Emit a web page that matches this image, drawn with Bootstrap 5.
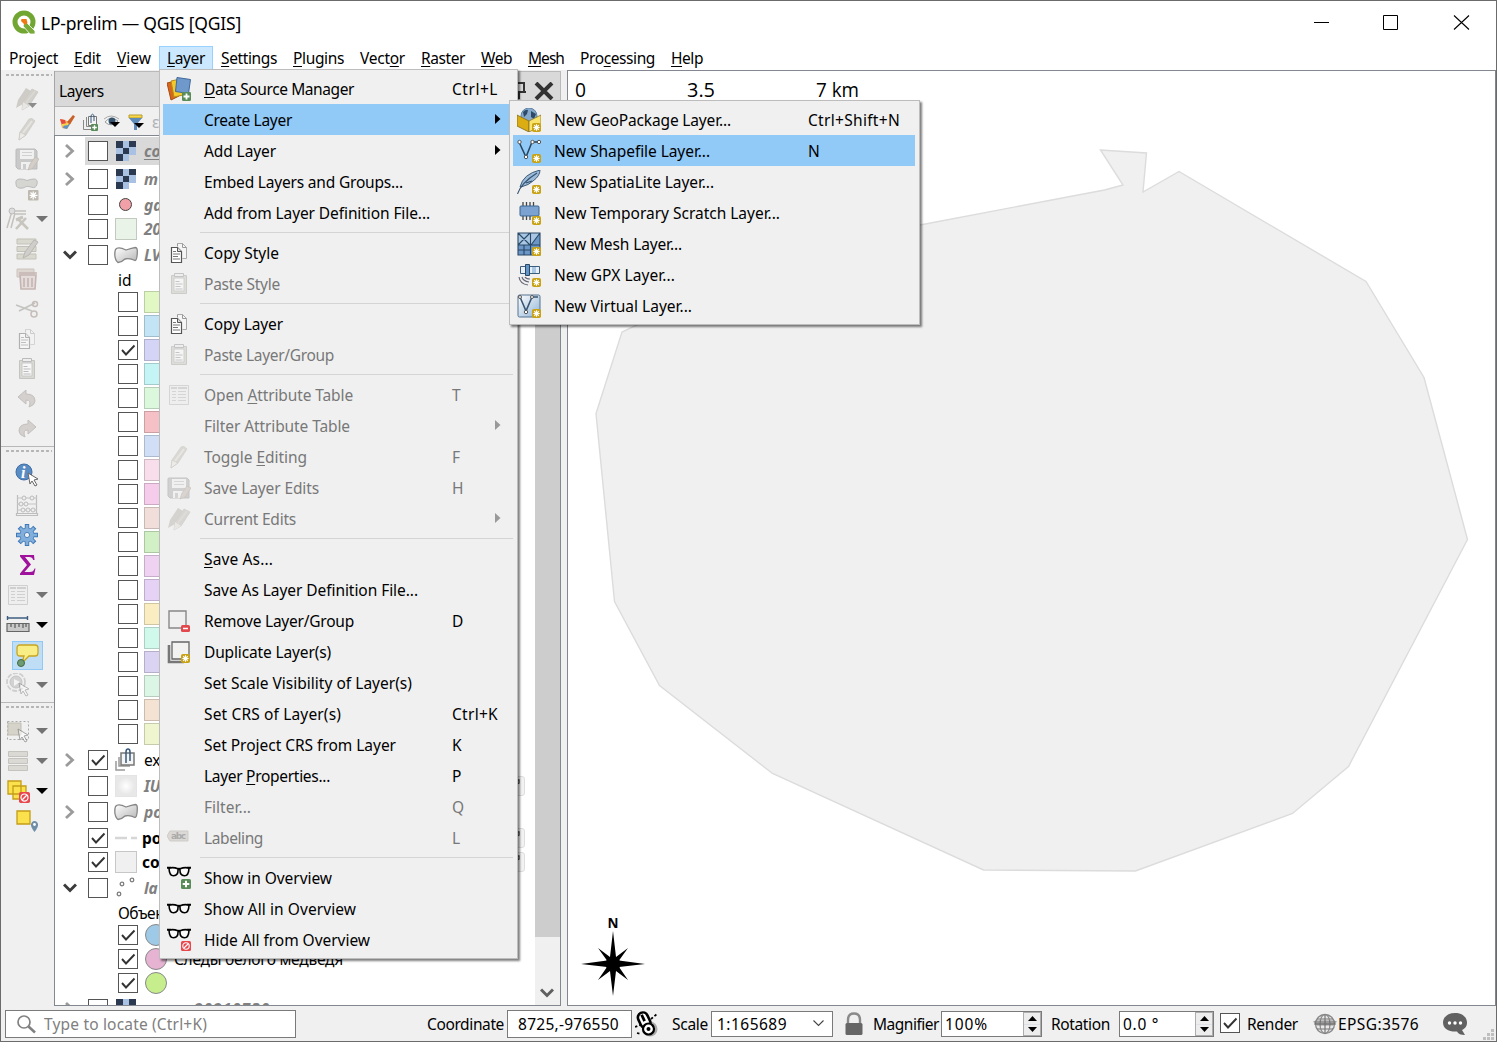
<!DOCTYPE html>
<html lang="en">
<head>
<meta charset="utf-8">
<title>LP-prelim — QGIS [QGIS]</title>
<link href="https://cdn.jsdelivr.net/npm/bootstrap@5.3.0/dist/css/bootstrap.min.css" rel="stylesheet">
<script src="https://cdn.jsdelivr.net/npm/bootstrap@5.3.0/dist/js/bootstrap.bundle.min.js"></script>
<style>
body{font-family:"Noto Sans","Liberation Sans",sans-serif;font-size:15.5px;line-height:20px;color:#000;background:#f0f0f0}
.win{width:1497px;height:1042px;border:1px solid #6b6b6b;overflow:hidden}
[data-w]{white-space:nowrap;display:inline-block}
u{text-underline-offset:2px;text-decoration-thickness:1px}
svg{display:block;flex:none}
.titlebar{height:45px;background:#fff}
.appname{font-size:17.5px;margin-left:5px;margin-top:-2px}
.menus{height:24px;background:#fff}
.menus .mi{height:24px;line-height:23px;border:1px solid transparent;padding:0}
.menus .mi.on{background:#cce8ff;border-color:#99d1ff}
.work{height:936px;border-top:1px solid #f0f0f0}
.tools{width:53px}
.grip{height:4px;margin:2px 2px 0 4px;background:radial-gradient(circle,#b4b4b4 1.1px,transparent 1.4px) 0 0/5px 4px}
.tb{height:30px}
.tb .main-ic{width:52px;display:flex;justify-content:center}
.tb.drop .main-ic{width:34px}
.brk{border-top:1px solid #b8b8b8;margin-top:2px}
.tb-on{background:#bfdef5;border:1px solid #90c8f6;width:31px;height:29px;display:flex;align-items:center;justify-content:center}
.dock{width:508px;border-left:1px solid #a5a5a5}
.dockhead{height:37px;background:#d9d9d9;border:1px solid #b9b9b9;border-left:0;padding:3px 6px 0 4px}
.docktools{height:28px;padding:2px 0 0 2px}
.tree{background:#fff;border:1px solid #828790;margin-left:-1px}
.twist{width:30px;display:flex;justify-content:center}
.cb{width:20px;height:20px;border:1px solid #333;background:#fff;flex:none;outline:.5px solid #555;outline-offset:-1px}
.off{color:#808080;font-style:italic;font-weight:700}
.seln{background:#d9d9d9}
.sw{width:22px;height:22px;border:1px solid rgba(0,0,0,.17)}
.dot{width:22px;height:22px;border-radius:50%;border:1px solid #888;margin-left:1px}
.ind{width:20px;height:20px;border:1px solid #dedede;border-radius:3px;background:#f3f3f3;margin-right:10px;display:flex;justify-content:flex-end;align-items:start}
.scroll{width:25px;background:#f0f0f0}
.thumb{height:801px;background:#cdcdcd}
.canvas{background:#fff;border:1px solid #828790;margin:-1px 0 0 6px}
.status{height:35px;background:#f0f0f0}
.fld{background:#fff;border:1px solid #7a7a7a;display:flex;align-items:center}
.spinb{width:18px;height:24px;border:1px solid #adadad;background:#ededed}
.spinb div{height:11px;display:flex;align-items:center;justify-content:center}
.pop{position:absolute;background:#f0f0f0;border:1px solid #bdbdbd;padding:3px;box-shadow:2px 2px 2px rgba(0,0,0,.5)}
.pop-main{left:159px;top:69px;width:359px;height:890px}
.pop-sub{left:509px;top:100px;width:411px;height:225px}
.it{height:31px;display:flex;align-items:center}
.it .ic{width:32px;display:flex;justify-content:center;margin-right:9px;flex:none}
.it .tx{width:248px;flex:none}
.pop-sub .it .tx{width:254px}
.it.dis{color:#787878}
.it.dis .ic{opacity:.8}
.it.hi{background:#91c9f7}
.pop-sub .it{width:402px}
.sp{height:9px;padding-top:4px}
.sp div{border-top:1px solid #d4d4d4;margin:0 1px 0 37px}
.arr{margin:-2px 13px 0 auto}
.kmtx{font-family:"Open Sans",sans-serif}
</style>
</head>
<body>
<svg width="0" height="0" class="position-absolute">
<defs>
<linearGradient id="gb" x1="0" y1="0" x2="1" y2="1"><stop offset="0" stop-color="#fff"/><stop offset="1" stop-color="#b5b5b5"/></linearGradient>
<linearGradient id="gv" x1="0" y1="0" x2="1" y2="1"><stop offset="0" stop-color="#fff"/><stop offset="1" stop-color="#8fb4d6"/></linearGradient>
<symbol id="pencil" viewBox="0 0 24 24"><path d="M4 23l1-8L14 2q3-2 6 2l-9 14z" fill="#d5d3ce" stroke="#cfcdc8" stroke-width=".8"/><path d="M4 23l1-8 6 3z" fill="#eceae6" stroke="#c6c4bf" stroke-width=".7"/><path d="M8 16L17 4" stroke="#e6e4e0" stroke-width="2"/></symbol>
<symbol id="pencils" viewBox="0 0 24 24"><path d="M1 21l2-8L11 1l5 3-8 13z" fill="#cfccc7"/><path d="M7 23l1-8L17 2l6 3-9 14z" fill="#d2d0cb" stroke="#cac8c3" stroke-width=".8"/><path d="M7 23l1-8 6 4z" fill="#e8e6e2"/><path d="M11 16L20 4" stroke="#dbd8d4" stroke-width="1.500"/></symbol>
<symbol id="save" viewBox="0 0 24 24"><path d="M1 3q0-1 1-1h18l2 2v18H3l-2-2z" fill="#c9c9c9" stroke="#bbb"/><path d="M5 3h14v9H5zM6 15h11v7H6z" fill="#f0f0f0"/><path d="M7 5.500h10M7 8.500h10" stroke="#d0d0d0"/><path d="M8 17h3v5H8z" fill="#ccc"/><path d="M13 23l2-6 5-7 4 2-6 9z" fill="#d5cdc7" stroke="#bdbab5" stroke-width=".7"/></symbol>
<symbol id="copy" viewBox="0 0 24 24"><path d="M10.500 2.500h5l4 4v11h-4" fill="#f5f5f5" stroke="#aaa"/><path d="M15.500 2.500v4h4M10.500 2.500v3" fill="none" stroke="#999"/><path d="M4.500 6.500h6l4 4v11h-10z" fill="#fff" stroke="#555" stroke-width="1.200"/><path d="M10.500 6.500v4h4" fill="#ddd" stroke="#555"/><path d="M6 10.500h3M6 13h7M6 15.500h5M6 18h7" stroke="#777"/></symbol>
<symbol id="paste" viewBox="0 0 24 24"><path d="M4.500 3.500h15v18h-15z" fill="#d8d8d4" stroke="#c4c4c0"/><path d="M7 6h10v13H7z" fill="#f7f7f7" stroke="#c8c8c8"/><path d="M7.500 1.500h9v3h-9z" fill="#eee" stroke="#bbb"/><path d="M8.500 9.500h4M8.500 12h7M8.500 14.500h5M8.500 17h7" stroke="#bbb"/></symbol>
<symbol id="table" viewBox="0 0 24 24"><path d="M2.500 2.500h19v19h-19z" fill="#eee" stroke="#cfcfcf"/><path d="M4 4h6v2H4zM11 4h9v2h-9z" fill="#cfcfcf"/><path d="M5 8.500h4M11 8.500h8M5 11.500h4M11 11.500h8M5 14.500h4M11 14.500h8M5 17.500h4M11 17.500h8" stroke="#cfcfcf" stroke-width="1.200"/></symbol>
<symbol id="star" viewBox="0 0 10 10"><rect width="10" height="10" rx="2" fill="#c9a317"/><path d="M5 1.500v7M1.500 5h7M2.500 2.500l5 5M7.500 2.500l-5 5" stroke="#fff" stroke-width="1.200"/></symbol>
<symbol id="plus" viewBox="0 0 10 10"><rect width="10" height="10" rx="1.500" fill="#5a8c5a"/><path d="M5 1.700v6.600M1.700 5h6.600" stroke="#fff" stroke-width="2"/></symbol>
<symbol id="no" viewBox="0 0 10 10"><rect width="10" height="10" rx="1.500" fill="#e8484d"/><circle cx="5" cy="5" r="3.200" fill="none" stroke="#fff" stroke-width="1.100"/><path d="M3 7l4-4" stroke="#fff" stroke-width="1.100"/></symbol>
<symbol id="glasses" viewBox="0 0 24 12"><path d="M0 1.800h4M20 1.800h4M10 3.500q2-1.500 4 0" fill="none" stroke="#000" stroke-width="2"/><path d="M2 2.200Q6 .8 11 2.800 11.500 9.800 6.500 9.800 2.300 9.800 2 2.200zM22 2.200Q18 .8 13 2.800 12.500 9.800 17.500 9.800q4.200 0 4.500-7.600z" fill="#fafafa" stroke="#000" stroke-width="1.600"/></symbol>
<symbol id="poly" viewBox="0 0 24 18"><path d="M1.500 3.500Q4 0 12 4q6-2 9.500-2.500 2 0 1.800 5-.3 8-2.300 8-5-2.500-10-1.500-3 3-7 3.500Q1 14 .8 9 .8 5 1.500 3.500z" fill="url(#gb)" stroke="#858585" stroke-width="1.300"/></symbol>
<symbol id="raster" viewBox="0 0 20 20"><path d="M0 0h20v14h-7v6H0z" fill="#a9c1e3"/><path d="M0 0h7v7H0zM13 0h7v6h-7zM7 7h6v6H7zM0 13h7v7H0z" fill="#2b3a50"/></symbol>
<symbol id="tick" viewBox="0 0 18 18"><path d="M3 9l4 4.500L15.500 4.500" fill="none" stroke="#333" stroke-width="1.900"/></symbol>
<symbol id="right" viewBox="0 0 12 16"><path d="M2 2l6.500 6L2 14" fill="none" stroke="#9b9b9b" stroke-width="2.800"/></symbol>
<symbol id="down" viewBox="0 0 14 10"><path d="M1 1.500l6 6 6-6" fill="none" stroke="#3c3c3c" stroke-width="3"/></symbol>
<symbol id="tri" viewBox="0 0 12 6"><path d="M0 0h12L6 6z"/></symbol>
<symbol id="rt" viewBox="0 0 6 10"><path d="M0 0l5.500 5L0 10z"/></symbol>
<symbol id="group" viewBox="0 0 24 24"><path d="M2 13v9h9M5 9v9h11" fill="none" stroke="#999" stroke-width="1.500"/><path d="M7 5h13v12H7z" fill="#f5f5f5" stroke="#777" stroke-width="1.500"/><path d="M12 15V4q0-3 2-3t2 3v9" fill="none" stroke="#35597d" stroke-width="1.500"/></symbol>
<symbol id="cursor" viewBox="0 0 12 15"><path d="M1 1l10 6-4 1 3 5-2 1-3-5-2 3z" fill="#fff" stroke="#666"/></symbol>
<symbol id="undo" viewBox="0 0 24 24"><path d="M3 10l8-7v4q9 0 9 7 0 4-6 6 3-7-3-7v4z" fill="#d3d0cd" stroke="#c3bfbc"/></symbol>
<symbol id="blob-star" viewBox="0 0 24 24"><path d="M1 7Q0 2 5 2q4 0 7 1.500Q16 2 19 2q4 0 3 5t-6 3q-4-2-8 1-7 1-7-4z" fill="#d5d5d2" stroke="#bbb"/><rect x="13" y="13" width="10.500" height="10.500" rx="1" fill="#bdb9b0"/><path d="M18.200 14.500v8M14.500 18.300h8M15.500 15.500l5.500 5.500M21 15.500l-5.500 5.500" stroke="#fff" stroke-width="1.200"/></symbol>
</defs>
</svg>

<div class="win d-flex flex-column">
  <header class="titlebar d-flex align-items-center">
    <svg width="24" height="24" viewBox="0 0 24 24" style="margin:-3px 0 0 11px"><circle cx="12" cy="12" r="9" fill="none" stroke="#72a632" stroke-width="5"/><path d="M13 11l10 10v3h-5l-7-8z" fill="#78aa3a" stroke="#fff" stroke-width=".8"/><path d="M9.500 9h5l1 4-2.500 2-4-4z" fill="#ee7913"/></svg>
    <span class="appname" data-w="200">LP-prelim — QGIS [QGIS]</span>
    <div class="ms-auto d-flex align-items-center" style="margin:-3px 26px 0 0">
      <svg width="157" height="16" viewBox="0 0 157 16"><path d="M1 8.500h15M70.500 1.500h14v14h-14z" fill="none" stroke="#000"/><path d="M141 1.500l15 14M156 1.500l-15 14" stroke="#000" stroke-width="1.100"/></svg>
    </div>
  </header>

  <nav class="menus d-flex" id="mainMenu"></nav>

  <main class="work d-flex">
    <aside class="tools">
      <div class="grip"></div>
      <div id="tools1" style="padding-top:7px"></div>
      <div class="brk"></div><div class="grip"></div>
      <div id="tools2" style="padding-top:7px"></div>
      <div class="brk"></div><div class="grip"></div>
      <div id="tools3" style="padding-top:7px"></div>
    </aside>

    <section class="dock d-flex flex-column">
      <div class="dockhead d-flex align-items-center">
        <span data-w="45">Layers</span>
        <svg class="ms-auto" width="16" height="20" viewBox="0 0 16 20"><path d="M1 2h9v9H1zM0 11h12M5 11v7" fill="none" stroke="#333" stroke-width="2"/></svg>
        <svg class="ms-1" width="20" height="18" viewBox="0 0 20 18"><path d="M2 1l16 16M18 1L2 17" stroke="#333" stroke-width="4"/></svg>
      </div>
      <div class="docktools d-flex align-items-center">
        <svg width="20" height="18" viewBox="0 0 20 18"><path d="M3 6l5 1 6 3-4 6-5-1z" fill="#f0b45a"/><path d="M10 9l6-7 2 1.500-5 8z" fill="#c9622a"/><path d="M3 6l5 1 1 4-4 1z" fill="#e5483f"/><path d="M7 12l6-1-3 5-4-1z" fill="#5e92c6"/><path d="M5 12l6-1" stroke="#f6d14b" stroke-width="1.800"/></svg>
        <svg width="20" height="20" viewBox="0 0 20 20" style="margin-left:3px"><path d="M3.500 8v9.500H11M6.500 5v9.500H13" fill="none" stroke="#888"/><path d="M8.500 4.500h8v9h-8z" fill="#f5f5f5" stroke="#777"/><path d="M11 11V3.500q1.500-2.500 3 0V9" fill="none" stroke="#35597d"/><use href="#plus" x="11" y="12" width="7" height="7"/></svg>
        <svg width="20" height="16" viewBox="0 0 20 16" style="margin-left:3px"><path d="M2 8Q8 1 15 7q-7 7-13 1z" fill="#fff" stroke="#999"/><circle cx="9" cy="7" r="3.500" fill="#34536f"/><path d="M1 5Q8-1 16 5" fill="none" stroke="#aaa"/><path d="M7 8h10l-5 5z"/></svg>
        <svg width="20" height="18" viewBox="0 0 20 18" style="margin-left:3px"><path d="M3 2h13v3H3z" fill="#f6d84a" stroke="#b99b2f"/><path d="M3 5h13l-5 6v6H8v-6z" fill="#5e8bb8"/><path d="M8 10h10l-5 5z"/></svg>
        <span class="text-secondary opacity-50" style="margin-left:6px">ε</span>
      </div>
      <div class="tree d-flex flex-grow-1 overflow-hidden">
        <div class="flex-grow-1 overflow-hidden" id="layerTree" style="padding-top:1px"></div>
        <div class="scroll d-flex flex-column">
          <div class="thumb"></div>
          <svg width="14" height="10" style="margin:51px 0 0 5px" opacity=".8"><use href="#down"/></svg>
        </div>
      </div>
    </section>

    <section class="canvas flex-grow-1 overflow-hidden">
      <svg width="928" height="934" viewBox="568 71 928 934">
        <path d="M1100.500 150l46 3-3.500 39 36-20.500 187 110 58 96 43.500 162-119 227-56 47-157 57.500-152-1-211-96.500-113-88-45-84-18.500-188L622 332l40-19 258-88 184.500-35 18.500-5z" fill="#f0f0f0" stroke="#dcdcdc" stroke-width="1.400"/>
        <g class="kmtx" font-size="19.500"><text x="575" y="96.500" textLength="11" lengthAdjust="spacingAndGlyphs">0</text><text x="687" y="96.500" textLength="28" lengthAdjust="spacingAndGlyphs">3.5</text><text x="816" y="96.500" textLength="43" lengthAdjust="spacingAndGlyphs">7 km</text></g>
        <text x="607.500" y="928" font-size="13.500" font-weight="700" textLength="11" lengthAdjust="spacingAndGlyphs" font-family="Open Sans">N</text>
        <path d="M613 931l3 26 12-9-9 12.500 26 3.500-26 3L628 980l-12-9-3 25-3-25-12 9 9-13-26-3 26-3.500L598 948l12 9z"/>
        <circle cx="613" cy="964" r="7.500"/>
      </svg>
    </section>
  </main>

  <footer class="status d-flex align-items-center">
    <div class="fld" style="margin-left:4px;width:291px;height:28px;padding:1px 0 0 10px">
      <svg width="20" height="20" viewBox="0 0 20 20"><circle cx="8" cy="8" r="6" fill="none" stroke="#808080" stroke-width="1.700"/><path d="M12.500 12.500L19 18.500" stroke="#808080" stroke-width="2.500"/></svg>
      <span data-w="163" style="margin-left:8px;color:#808080">Type to locate (Ctrl+K)</span>
    </div>
    <span data-w="77" style="margin:1px 0 0 131px">Coordinate</span>
    <div class="fld" style="margin-left:3px;width:125px;height:28px;padding:1px 0 0 10px"><span data-w="101">8725,-976550</span></div>
    <svg width="26" height="26" viewBox="0 0 26 26" style="margin-left:3px"><circle cx="15" cy="18" r="7.500" fill="#aaa"/><g transform="rotate(-25 10 11)"><rect x="5" y="1" width="10" height="16" rx="5" fill="#fff" stroke="#000" stroke-width="2.600"/><path d="M10 3v7" stroke="#000" stroke-width="2.800"/></g><circle cx="13.500" cy="18" r="5.500" fill="#fff" stroke="#000" stroke-width="2.200"/><circle cx="13.500" cy="18" r="2"/><path d="M16 8l6-5M0 16l5-2M2 22l4 1" stroke="#000" stroke-width="1.800" stroke-dasharray="2.500 2"/></svg>
    <span data-w="36" style="margin-left:11px">Scale</span>
    <div class="fld" style="margin-left:3px;width:122px;height:26px;padding-left:5px"><span data-w="70">1:165689</span><svg class="ms-auto me-2" width="11" height="7"><path d="M.5.500l5 5 5-5" fill="none" stroke="#444" stroke-width="1.100"/></svg></div>
    <svg width="20" height="24" viewBox="0 0 20 24" style="margin-left:11px"><path d="M4 12V8q0-6.500 6-6.500T16 8v4" fill="none" stroke="#8a8a8a" stroke-width="2.400"/><rect x="1.500" y="11" width="17" height="12" rx="1.500" fill="#666"/></svg>
    <span data-w="66" style="margin:1px 0 0 9px">Magnifier</span>
    <div class="fld" style="margin-left:2px;width:101px;height:26px;padding:0 0 0 3px"><span data-w="43">100%</span><div class="spinb ms-auto"><div><svg width="9" height="5"><path d="M0 5h9L4.500 0z"/></svg></div><div class="border-top"><svg width="9" height="5"><path d="M0 0h9L4.500 5z"/></svg></div></div></div>
    <span data-w="59" style="margin:1px 0 0 9px">Rotation</span>
    <div class="fld" style="margin-left:9px;width:95px;height:26px;padding:0 0 0 3px"><span data-w="36">0.0 °</span><div class="spinb ms-auto"><div><svg width="9" height="5"><path d="M0 5h9L4.500 0z"/></svg></div><div class="border-top"><svg width="9" height="5"><path d="M0 0h9L4.500 5z"/></svg></div></div></div>
    <div class="cb" style="margin:-2px 0 0 6px"><svg width="18" height="18"><use href="#tick"/></svg></div>
    <span data-w="51" style="margin-left:7px">Render</span>
    <svg width="24" height="22" viewBox="0 0 24 22" style="margin-left:15px"><circle cx="12" cy="11" r="9.500" fill="#e8e8e8" stroke="#888" stroke-width="1.300"/><path d="M12 1v20M4 6h16M1 11h22M4 16h16" stroke="#777" stroke-width="1.200"/><ellipse cx="12" cy="11" rx="5" ry="9.500" fill="none" stroke="#888" stroke-width="1.200"/><path d="M0 8.500l4 4h16l4-4-3-1H3z" fill="#666" opacity=".6"/></svg>
    <span data-w="81" style="margin:1px 0 0 1px">EPSG:3576</span>
    <svg width="26" height="24" viewBox="0 0 26 24" style="margin-left:23px"><path d="M13 1c7 0 12 4 12 9.500 0 4-2 6-5 7.500l3 5c-4 0-7-1-8-3.500C7 20 1 17 1 10.500 1 5 6 1 13 1z" fill="#616161"/><circle cx="7.500" cy="11" r="1.700" fill="#fff"/><circle cx="13" cy="11" r="1.700" fill="#fff"/><circle cx="18.500" cy="11" r="1.700" fill="#fff"/></svg>
    <svg width="11" height="11" viewBox="0 0 11 11" class="ms-auto align-self-end" style="margin:0 2px 1px 0"><path d="M8 0h3v3H8zM4 4h3v3H4zM8 4h3v3H8zM0 8h3v3H0zM4 8h3v3H4zM8 8h3v3H8z" fill="#bfbfbf"/></svg>
  </footer>
</div>

<div class="pop pop-main" id="layerMenu"></div>
<div class="pop pop-sub" id="createMenu"></div>

<script>
const $id=i=>document.getElementById(i);
const use=(id,w=24,h=24)=>`<svg width="${w}" height="${h}"><use href="#${id}"/></svg>`;
const svg=(b,w=24,h=24)=>`<svg width="${w}" height="${h}" viewBox="0 0 24 24">${b}</svg>`;
const star='<use href="#star" x="15" y="15" width="9" height="9"/>';

/* menu bar: label, left edge, text width */
const bar=[['Pro<u>j</u>ect',9,49],['<u>E</u>dit',74,27],['<u>V</u>iew',117,34],['<u>L</u>ayer',167,38],['<u>S</u>ettings',221,56],['<u>P</u>lugins',293,51],['Vect<u>o</u>r',360,45],['<u>R</u>aster',421,44],['<u>W</u>eb',481,31],['<u>M</u>esh',528,36],['Pro<u>c</u>essing',580,75],['<u>H</u>elp',671,32]];
let x=1;
$id('mainMenu').innerHTML=bar.map(([t,l,w],i)=>{const next=i<bar.length-1?bar[i+1][1]-8:l+w+8;const pad=l-x-1;const s=`<div class="mi ${i==3?'on':''}" style="width:${next-x}px;padding-left:${pad}px"><span data-w="${w}">${t}</span></div>`;x=next;return s}).join('');

/* toolbars */
const tb=(ic,drop)=>`<div class="tb d-flex align-items-center ${drop?'drop':''}"><div class="main-ic">${ic}</div>${drop?`<svg width="12" height="6" fill="${drop}" style="margin-left:1px"><use href="#tri"/></svg>`:''}</div>`;
$id('tools1').innerHTML=[
 tb(svg('<use href="#pencils"/><path d="M13 16h9l-4.500 5z" fill="#8c8c8c"/>')),
 tb(use('pencil')),tb(use('save')),tb(use('blob-star')),
 tb(svg('<path d="M1 21L6 4M6 4h14M8 7h12M5 21L9 6" fill="none" stroke="#c4c1bc" stroke-width="1.500"/><circle cx="6" cy="4" r="3" fill="#ddd" stroke="#bbb"/><path d="M10 22L20 11M12 12l10 10" stroke="#c8c5be" stroke-width="2.600"/><path d="M10 13l7-3" stroke="#c8c5be" stroke-width="3"/>'),'#737373'),
 tb(svg('<path d="M2 2h19v5H2zM2 9.500h19v5H2zM2 17h19v5H2z" fill="#dad9cf" stroke="#c3c2b8"/><path d="M8 21l2-6 9-12 4 2-9 13z" fill="#d0ceca" stroke="#b9b7b2"/>')),
 tb(svg('<path d="M2 2h17v8H2z" fill="#ddd6d0" stroke="#ccc4be"/><path d="M4 6h18M5 8h16l-1 14H6z" fill="#e3dcda" stroke="#c5b5b2" stroke-width="1.600"/><path d="M9 11v9M13 11v9M17 11v9" stroke="#c5b5b2" stroke-width="1.600"/>')),
 tb(svg('<path d="M1 8l16 6M4 14L20 6" stroke="#c3c3c0" stroke-width="1.600"/><circle cx="20" cy="7" r="2.500" fill="none" stroke="#c6bdba" stroke-width="1.500"/><circle cx="19" cy="17" r="3" fill="none" stroke="#c6bdba" stroke-width="1.500"/>')),
 tb('<div style="opacity:.4">'+use('copy')+'</div>'),tb(use('paste')),tb(use('undo')),
 tb(svg('<use href="#undo" transform="translate(24 0) scale(-1 1)"/>'))].join('');
$id('tools2').innerHTML=[
 tb(svg('<circle cx="9" cy="9" r="8" fill="#5a8cc4" stroke="#3f6da5"/><text x="6" y="15" fill="#fff" font-size="16" font-style="italic" font-weight="700" font-family="Liberation Serif">i</text><use href="#cursor" x="12" y="9" width="12" height="15"/>')),
 tb(svg('<path d="M2.500 2v18M21.500 2v18M1.500 20.500h21v2h-21z" fill="none" stroke="#bdbdbd" stroke-width="1.200"/><path d="M2 5h20M2 11h20M2 17h20" stroke="#c4c4c4"/><g fill="#eee" stroke="#bbb"><circle cx="9" cy="5" r="2"/><circle cx="17" cy="5" r="2"/><circle cx="6" cy="11" r="2"/><circle cx="11" cy="11" r="2"/><circle cx="8" cy="17" r="2"/><circle cx="13" cy="17" r="2"/><circle cx="18" cy="17" r="2"/></g>')),
 tb(svg('<g stroke="#3f79b8" stroke-width="4.400"><path d="M12 1v22M1 12h22M4.200 4.200l15.600 15.600M19.800 4.200L4.200 19.800"/></g><circle cx="12" cy="12" r="7.500" fill="#4a80ba"/><g stroke="#82aedb" stroke-width="2.600"><path d="M12 2v20M2 12h20M5 5l14 14M19 5L5 19"/></g><circle cx="12" cy="12" r="6.700" fill="#82aedb"/><circle cx="12" cy="12" r="2.600" fill="#f0f0f0" stroke="#4a80ba"/>')),
 tb(svg('<path d="M5 2h14l.5 5h-1.300Q17.500 4 14 4h-4l6 7.500L9.500 19H15q3.500 0 4.500-3.500h1L19 22H5v-1.500L12 12 5 3.500z" fill="#a0129c"/>')),
 tb(use('table'),'#737373'),
 tb(svg('<path d="M2 5h19M1.500 3v4M21.500 3v4" stroke="#3f5d80" stroke-width="1.400"/><path d="M1 10.500h22v8H1z" fill="#c9c9c9" stroke="#666" stroke-width="1.200"/><path d="M5 11v3M9 11v4M13 11v3M17 11v4M20 11v3" stroke="#444"/>'),'#000'),
 tb('<div class="tb-on">'+svg('<path d="M5 2h15q3 0 3 3v5q0 3-3 3h-6l-7 7 2-7H5q-3 0-3-3V5q0-3 3-3z" fill="#f9ee86" stroke="#c8a520" stroke-width="1.300"/><circle cx="6" cy="20" r="3.500" fill="#6d9b72" stroke="#416b48"/>')+'</div>'),
 tb(svg('<circle cx="10" cy="9" r="9" fill="none" stroke="#cecece" stroke-width="1.800" stroke-dasharray="5 1.500"/><circle cx="10" cy="9" r="6" fill="#d2d2d2" stroke="#c4c4c4"/><path d="M8 6l6 3-6 4z" fill="#f3f3f3"/><use href="#cursor" x="12" y="9" width="12" height="15" opacity=".4"/>'),'#737373')].join('');
$id('tools3').innerHTML=[
 tb(svg('<path d="M1.500 2.500h21v18h-21z" fill="none" stroke="#aaa" stroke-dasharray="2 2"/><path d="M2 4h13v12H2z" fill="#d6d4ca" stroke="#c1beb1"/><use href="#cursor" x="11" y="9" width="12" height="15" opacity=".55"/>'),'#737373'),
 tb(svg('<path d="M2.500 2.500h19v5h-19zM2.500 9.500h19v5h-19zM2.500 16.500h19v5h-19z" fill="#dad9d3" stroke="#c4c3bd"/>'),'#737373'),
 tb(svg('<path d="M2 2h13v13H2zM7 7h13v13H7z" fill="#fbe24c" stroke="#c49d17" stroke-width="1.300"/><use href="#no" x="13" y="13" width="11" height="11"/>'),'#000'),
 tb(svg('<path d="M2 2h13v13H2z" fill="#fbe24c" stroke="#c49d17" stroke-width="1.300"/><path d="M19.500 23q-4-5-3.500-8 1-3 3.500-3t3.500 3q.5 3-3.500 8z" fill="#6f8ea8"/><circle cx="19.500" cy="15.500" r="1.400" fill="#fff"/>'))].join('');

/* layer tree */
const cb=c=>`<div class="cb">${c?use('tick',18,18):''}</div>`;
const row=(h,tw,c,ic,t,cls='',ind='')=>`<div class="d-flex" style="height:${h}px"><div class="twist align-items-center">${tw=='r'?use('right',12,16):tw=='d'?use('down',14,10):''}</div><div class="d-flex align-items-center flex-grow-1 ${cls.includes('seln')?'seln':''}" style="padding-left:3px">${cb(c)}<div style="width:24px;margin:0 6px" class="d-flex justify-content-center">${ic}</div><span class="text-nowrap ${cls.replace('seln','')}">${t}</span>${ind}</div></div>`;
const leg=(c,sym,t='')=>`<div class="d-flex align-items-center" style="height:24px;padding-left:63px">${cb(c)}<div style="margin-left:6px">${sym}</div><span style="margin-left:7px">${t}</span></div>`;
const sw=c=>`<div class="sw" style="background:${c}"></div>`, dot=c=>`<div class="dot" style="background:${c}"></div>`;
const ind='<div class="ind ms-auto"><svg width="9" height="10"><path d="M1 3h3v3l-4 2" fill="none" stroke="#444" stroke-width="1.300"/></svg></div>';
const head=(h,t)=>`<div style="height:${h}px;line-height:${h+2}px;padding-left:63px">${t}</div>`;
const cols=['#e2f8c4','#c2e4f5','#d4d4f7','#c4f5f4','#dbf8dc','#f5c1c6','#d0dff6','#f8deea','#f5ccea','#f1dedb','#d1f0c6','#efd2f2','#e6d2f5','#f9edc1','#d0f9ec','#dad3f2','#dcf6e6','#f4e3d2','#eff5cf'];
$id('layerTree').innerHTML=row(28,'r',0,use('raster',20,20),'<u>co</u>','off seln')
+row(28,'r',0,use('raster',20,20),'m','off')
+row(24,'',0,'<div style="width:13px;height:13px;border-radius:50%;background:#f0a0a6;border:1.500px solid #444"></div>','ga','off')
+row(24,'',0,sw('#eaf3e7'),'20','off')
+row(28,'d',0,use('poly',24,18),'LV','off')
+head(21,'id')+cols.map((c,i)=>leg(i==2,sw(c))).join('')
+row(28,'r',1,use('group'),'ex')
+row(24,'',0,'<div class="sw" style="background:radial-gradient(#fff,#e8e8e8 60%);border-color:#e4e4e4"></div>','IU','off',ind)
+row(28,'r',0,use('poly',24,18),'po','off')
+row(24,'',1,'<svg width="24" height="4"><path d="M1 2h12M17 2h6" stroke="#d6d6d6" stroke-width="2.500"/></svg>','<span style="margin-left:-2px">po</span>','fw-bold',ind)
+row(24,'',1,sw('#f0f0f0'),'<span style="margin-left:-2px">co</span>','fw-bold',ind)
+row(28,'d',0,svg('<g fill="none" stroke="#7d7d7d" stroke-width="1.300"><circle cx="5" cy="18" r="1.800"/><circle cx="8" cy="8" r="1.800"/><circle cx="18" cy="4" r="1.800"/></g>'),'la','off')
+head(21,'<span data-w="45">Объек</span>')+leg(1,dot('#9fcae7'))+leg(1,dot('#e6b3d3'),'<span data-w="169">Следы белого медведя</span>')+leg(1,dot('#c7ee8d'))
+row(28,'r',0,use('raster',20,20),'<span style="margin-left:50px;letter-spacing:1px">20210730</span>','off');

/* menus: icon, label, label width, shortcut, flags */
const it=(ic,t,w,k='',f='')=>`<div class="it ${f.includes('d')?'dis':''} ${f.includes('h')?'hi':''}"><div class="ic">${ic}</div><div class="tx"><span data-w="${w}">${t}</span></div>${k?`<span ${k.length>1?`data-w="${k.length>7?92:46}"`:''}>${k}</span>`:''}${f.includes('a')?`<svg class="arr" width="6" height="10" fill="${f.includes('d')?'#999':'#000'}"><use href="#rt"/></svg>`:''}</div>`;
const sp='<div class="sp"><div></div></div>';
$id('layerMenu').innerHTML=
 it(svg('<path d="M0 6l9-2 3 15-8 4z" fill="#d9651b" stroke="#a74c12"/><path d="M4 4l9-2 3 16-9 2z" fill="#f3c92d" stroke="#b48d19"/><path d="M10 .5l13.500 2-2 14-13-2z" fill="#6f98cb" stroke="#40699a"/><use href="#plus" x="15" y="15" width="9" height="9"/>'),'<u>D</u>ata Source Manager',150,'Ctrl+L')
+it('','Create Layer',88,'','ha')+it('','Add Layer',72,'','a')+it('','Embed Layers and Groups...',199)+it('','Add from Layer Definition File...',226)+sp
+it(use('copy'),'Copy Style',75)+it(use('paste'),'Paste Style',76,'','d')+sp
+it(use('copy'),'Copy Layer',79)+it(use('paste'),'Paste Layer/Group',130,'','d')+sp
+it(use('table'),'Open <u>A</u>ttribute Table',149,'T','d')+it('','Filter Attribute Table',146,'','da')+it(use('pencil'),'Toggle <u>E</u>diting',103,'F','d')+it(use('save'),'Save Layer Edits',115,'H','d')+it(use('pencils'),'Current Edits',92,'','da')+sp
+it('','<u>S</u>ave As...',69)+it('','Save As Layer Definition File...',214)
+it(svg('<path d="M2 2h17v17H2z" fill="#f0f0f0" stroke="#888" stroke-width="1.400"/><rect x="14" y="16" width="9" height="7" rx="1.500" fill="#e3484e"/><path d="M16 19.500h5" stroke="#fff" stroke-width="1.500"/>'),'Remove Layer/Group',150,'D')
+it(svg('<path d="M2 5v17h15" fill="none" stroke="#777" stroke-width="2.600"/><path d="M5 2h17v17H5z" fill="#f2f2f0" stroke="#666" stroke-width="1.300"/><use href="#star" x="14" y="14" width="9" height="9"/>'),'Duplicate Layer(s)',127)
+it('','Set Scale Visibility of Layer(s)',208)+it('','Set CRS of Layer(s)',137,'Ctrl+K')+it('','Set Project CRS from Layer',192,'K')+it('','Layer <u>P</u>roperties...',126,'P')+it('','Filter...',47,'Q','d')
+it(svg('<path d="M0 10l3-5h18v10H3z" fill="#d6d3cf" stroke="#c6c3bf"/><text x="4" y="13" font-size="9" font-weight="700" fill="#999" font-family="DejaVu Sans" textLength="15">abc</text>'),'Labeling',59,'L','d')+sp
+it(svg('<use href="#glasses" y="0" width="24" height="12"/><use href="#plus" x="14" y="13" width="10" height="10"/>'),'Show in Overview',128)
+it(use('glasses',24,12),'Show All in Overview',152)
+it(svg('<use href="#glasses" y="0" width="24" height="12"/><use href="#no" x="14" y="13" width="10" height="10"/>'),'Hide All from Overview',166);
$id('createMenu').innerHTML=
 it(svg('<circle cx="12" cy="8" r="8" fill="#86a9cc" stroke="#5f84a8"/><path d="M6 4q3-3 5-2l-1 4-3 3zM14 3l5 3-2 5-3-2z" fill="#2d4a66"/><path d="M0 7l12 6v11L0 18z" fill="#dbad12" stroke="#806818" stroke-width=".8"/><path d="M24 7l-12 6v11l12-6z" fill="#f8e36d" stroke="#8b7422" stroke-width=".8"/>'+star),'New GeoPackage Layer...',177,'Ctrl+Shift+N')
+it(svg('<path d="M2 3l7 15 6-15h7" fill="none" stroke="#28445e" stroke-width="1.500"/><g fill="#fff" stroke="#555"><circle cx="2.500" cy="3" r="1.700"/><circle cx="9" cy="18" r="1.700"/><circle cx="15.500" cy="3" r="1.700"/><circle cx="22" cy="3" r="1.700"/></g>'+star),'New Shapefile Layer...',156,'N','h')
+it(svg('<path d="M3 17Q6 4 23 0q0 6-7 11-4 4-12 6z" fill="#9dbbd9" stroke="#31506e" stroke-width=".9"/><path d="M.5 24Q4 13 20 3M9 13l6-2" fill="none" stroke="#31506e" stroke-width="1.100"/>'+star),'New SpatiaLite Layer...',160)
+it(svg('<path d="M6 1v4M9.500 1v4M13 1v4M16.500 1v4M6 15v4M9.500 15v4M13 15v4" stroke="#444" stroke-width="1.300"/><rect x="3" y="5" width="19" height="10" rx="1" fill="#7ba2d0" stroke="#3b648e"/>'+star),'New Temporary Scratch Layer...',226)
+it(svg('<path d="M1 1h22v22H1z" fill="#6b96c6"/><path d="M1 1h12.500v12H1zM14 1h9L14 13z" fill="#a9c6e2"/><path d="M1 1h22v22H1zM1 13h22M13.500 1v22M1 1l12 12M13 1L1 13M23 1l-9 12M7 13v10M1 18h12" fill="none" stroke="#284866" stroke-width="1.100"/>'+star),'New Mesh Layer...',128)
+it(svg('<path d="M3.500 3.500h19v7h-19z" fill="#e6eef6" stroke="#3d5d7d"/><path d="M15 4h4v6h-4z" fill="#a9c6e2"/><path d="M8.500 1.500h4v11h-4z" fill="#6394c8" stroke="#284866"/><path d="M2 14q1 7 9 8M5 14q1 4 7 5M8 14q1 2 5 2" fill="none" stroke="#667" stroke-width="1.200"/>'+star),'New GPX Layer...',121)
+it(svg('<rect x="1" y="1" width="22" height="22" rx="1.500" fill="url(#gv)" stroke="#54728f"/><path d="M3 3l6 14 6-14h6" fill="none" stroke="#3a5571" stroke-width="1.600"/><g fill="#fff" stroke="#555"><circle cx="3" cy="3" r="1.500"/><circle cx="9" cy="18" r="1.700"/><circle cx="15" cy="3" r="1.500"/></g>'+star),'New Virtual Layer...',138);

/* fit every label to its measured width */
document.querySelectorAll('[data-w]').forEach(e=>{const n=e.textContent.length;const w=e.getBoundingClientRect().width;e.style.letterSpacing=((e.dataset.w-w)/n).toFixed(3)+'px'});
</script>
</body>
</html>
